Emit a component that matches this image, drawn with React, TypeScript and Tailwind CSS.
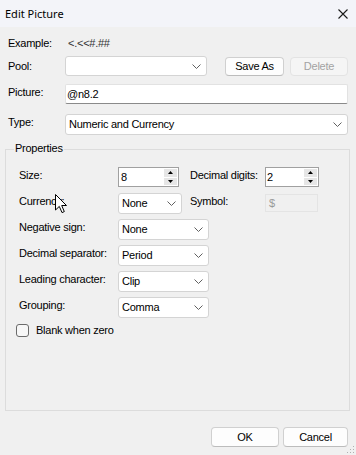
import React from "react";

const FONT = "font-['Liberation_Sans',Arial,sans-serif] text-[11px] tracking-[-0.25px] leading-[13px]";

function Chevron() {
  return (
    <svg width="9" height="5" viewBox="0 0 9 5" className="shrink-0">
      <polyline points="0.5,0.5 4.5,4.5 8.5,0.5" fill="none" stroke="#606060" strokeWidth="1" />
    </svg>
  );
}

function Combo({ value, w, h = 21 }: { value: string; w: string; h?: number }) {
  return (
    <div
      className={`flex ${w} ${h === 21 ? "h-[21px]" : "h-[20px]"} items-center justify-between rounded-[3px] border border-[#d4d4d4] bg-white pl-[3px] pr-[5px]`}
    >
      <span>{value}</span>
      <Chevron />
    </div>
  );
}

function Spinner({ value, w, pad }: { value: string; w: string; pad: string }) {
  return (
    <div className={`flex ${w} h-[20px] border border-[#a0a0a0] bg-white`}>
      <span className={`flex-1 ${pad} pt-[3px]`}>{value}</span>
      <div className="flex w-[14px] flex-col gap-[1px] bg-white p-[1px] pl-0">
        <div className="flex flex-1 items-center justify-center bg-[#e6e6e6]">
          <svg width="5" height="3" viewBox="0 0 5 3">
            <polygon points="2.5,0 5,3 0,3" fill="#000" />
          </svg>
        </div>
        <div className="flex flex-1 items-center justify-center bg-[#e6e6e6]">
          <svg width="5" height="3" viewBox="0 0 5 3">
            <polygon points="0,0 5,0 2.5,3" fill="#000" />
          </svg>
        </div>
      </div>
    </div>
  );
}

function PropRow({ label, children }: { label: string; children: React.ReactNode }) {
  return (
    <div className="mt-[5px] flex h-[21px]">
      <span className="w-[99px] pt-[2px]">{label}</span>
      {children}
    </div>
  );
}

export default function App() {
  return (
    <div className={`relative h-[455px] w-[356px] overflow-hidden bg-[#f0f0f0] text-black ${FONT}`}>
      <div className="flex h-[27px] items-center justify-between bg-[#f3f4f9] pl-[5px] pr-[8px]">
        <span className="font-['Noto_Sans',sans-serif] text-[11px] tracking-normal">Edit Picture</span>
        <svg width="10" height="10" viewBox="0 0 10 10">
          <path d="M0.5 0.5 L9.5 9.5 M9.5 0.5 L0.5 9.5" stroke="#1a1a1a" strokeWidth="1.1" />
        </svg>
      </div>

      <div className="px-[8px]">
        <div className="mt-[9px] flex h-[14px] items-center">
          <span className="w-[57px]">Example:</span>
          <span className="pl-[3px] text-[#333]">&lt;.&lt;&lt;#.##</span>
        </div>

        <div className="mt-[6px] flex h-[20px] items-center">
          <span className="w-[57px]">Pool:</span>
          <Combo value="" w="w-[142px]" h={20} />
          <button className="ml-[18px] h-[19px] w-[59px] rounded-[4px] border border-[#d0d0d0] border-b-[#bcbcbc] bg-[#fdfdfd]">
            Save As
          </button>
          <button className="ml-[6px] h-[19px] w-[58px] rounded-[4px] border border-[#e3e3e3] bg-[#f5f5f5] text-[#a3a3a3]">
            Delete
          </button>
        </div>

        <div className="mt-[8px] flex h-[20px]">
          <span className="w-[57px] pt-[2px]">Picture:</span>
          <div className="h-[20px] w-[283px] rounded-[2px] border border-[#e2e2e2] border-b-[#8a8a8a] bg-white pl-[1px] pt-[3px]">
            @n8.2
          </div>
        </div>

        <div className="mt-[10px] flex h-[21px]">
          <span className="w-[57px] pt-[2px]">Type:</span>
          <Combo value="Numeric and Currency" w="w-[283px]" />
        </div>
      </div>

      <div className="relative ml-[5px] mt-[14px] h-[262px] w-[345px] border border-[#dcdcdc] pl-[13px] pt-[12px]">
        <span className="absolute left-[8px] top-[-8px] bg-[#f0f0f0] px-[1px]">Properties</span>

        <PropRow label="Size:">
          <div className="w-[72px]">
            <Spinner value="8" w="w-[61px]" pad="pl-[2px]" />
          </div>
          <span className="w-[75px] pt-[2px]">Decimal digits:</span>
          <Spinner value="2" w="w-[54px]" pad="pl-[1px]" />
        </PropRow>

        <PropRow label="Currency:">
          <div className="w-[72px]">
            <Combo value="None" w="w-[64px]" />
          </div>
          <span className="w-[75px] pt-[2px]">Symbol:</span>
          <div className="mt-[1px] h-[18px] w-[53px] border border-[#e4e4e4] bg-[#f0f0f0] pl-[3px] pt-[2px] text-[#9a9a9a]">
            $
          </div>
        </PropRow>

        <PropRow label="Negative sign:">
          <Combo value="None" w="w-[91px]" />
        </PropRow>
        <PropRow label="Decimal separator:">
          <Combo value="Period" w="w-[91px]" />
        </PropRow>
        <PropRow label="Leading character:">
          <Combo value="Clip" w="w-[91px]" />
        </PropRow>
        <PropRow label="Grouping:">
          <Combo value="Comma" w="w-[91px]" />
        </PropRow>

        <div className="ml-[-3px] mt-[6px] flex h-[13px] items-center gap-[7px]">
          <div className="h-[13px] w-[13px] rounded-[3px] border border-[#6b6b6b] bg-[#f7f7f7]" />
          <span>Blank when zero</span>
        </div>
      </div>

      <div className="mt-[16px] flex justify-end gap-[4px] pr-[8px]">
        <button className="h-[20px] w-[68px] rounded-[4px] border border-[#d0d0d0] border-b-[#bcbcbc] bg-[#fdfdfd]">
          OK
        </button>
        <button className="h-[20px] w-[65px] rounded-[4px] border border-[#d0d0d0] border-b-[#bcbcbc] bg-[#fdfdfd]">
          Cancel
        </button>
      </div>

      <svg width="8" height="8" viewBox="0 0 8 8" className="absolute bottom-[1px] right-[1px]">
        <rect x="6" y="0" width="1" height="1" fill="#b0b0b0" />
        <rect x="3" y="3" width="1" height="1" fill="#b0b0b0" />
        <rect x="6" y="3" width="1" height="1" fill="#b0b0b0" />
        <rect x="0" y="6" width="1" height="1" fill="#b0b0b0" />
        <rect x="3" y="6" width="1" height="1" fill="#b0b0b0" />
        <rect x="6" y="6" width="1" height="1" fill="#b0b0b0" />
      </svg>

      <svg width="13" height="20" viewBox="0 0 13 20" className="absolute left-[55px] top-[194px]">
        <path d="M0.5 0.5 L0.5 16 L4.3 12.4 L7 18.6 L9.3 17.6 L6.7 11.5 L11.5 11.5 Z" fill="#fff" stroke="#000" strokeWidth="1" strokeLinejoin="round" />
      </svg>
    </div>
  );
}
